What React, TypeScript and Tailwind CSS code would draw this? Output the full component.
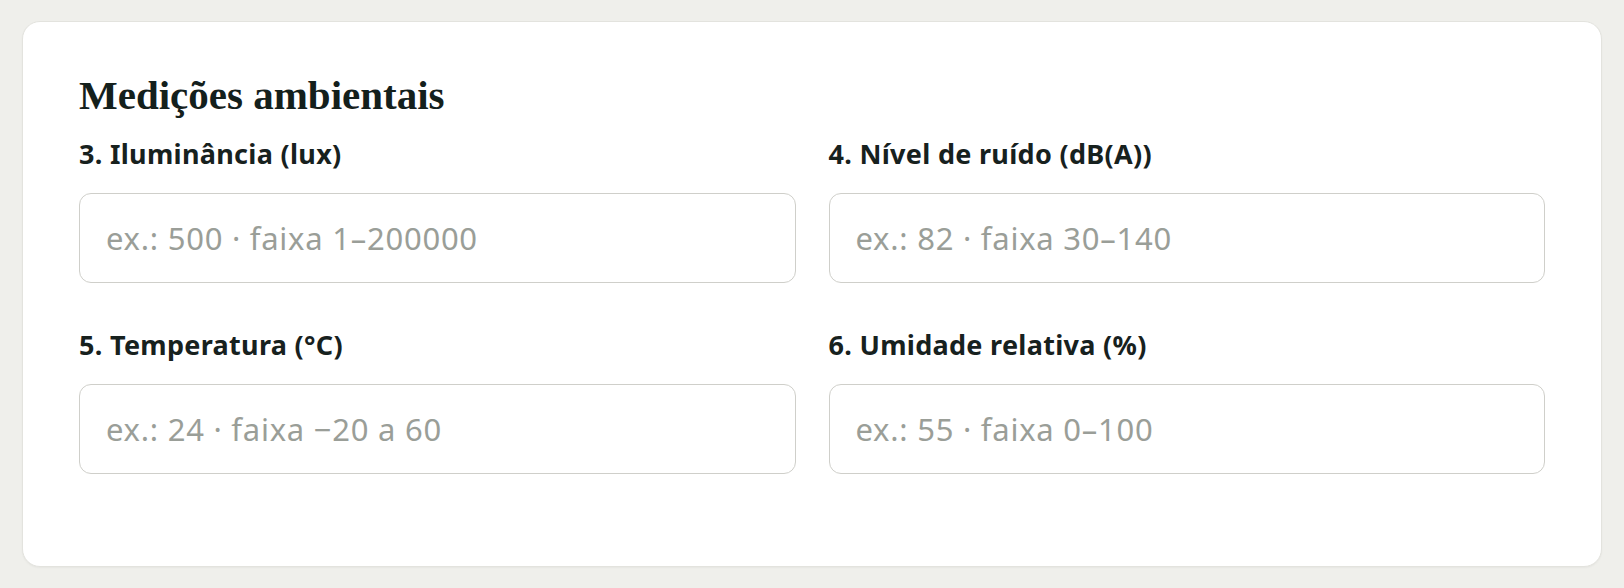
export default function App() {
  const fields = [
    { label: "3. Iluminância (lux)", placeholder: "ex.: 500 · faixa 1–200000" },
    { label: "4. Nível de ruído (dB(A))", placeholder: "ex.: 82 · faixa 30–140" },
    { label: "5. Temperatura (°C)", placeholder: "ex.: 24 · faixa −20 a 60" },
    { label: "6. Umidade relativa (%)", placeholder: "ex.: 55 · faixa 0–100" },
  ];

  return (
    <div className="min-h-screen bg-[#efefeb] px-[22px] pt-[21px] pb-[22px]">
      <div className="rounded-[18px] border border-[#e3e3de] bg-white px-[56px] pt-[49px] pb-[92px] shadow-[0_1px_2px_rgba(0,0,0,0.04)]">
        <h2 className="text-[41px] font-bold leading-[48px] text-[#14201c] [font-family:'Liberation_Serif',serif]">
          Medições ambientais
        </h2>
        <div className="mt-[19px] grid grid-cols-2 gap-x-[33px] gap-y-[46px]">
          {fields.map((f) => (
            <label key={f.label} className="flex flex-col [font-family:'Noto_Sans',sans-serif]">
              <span className="text-[27px] font-bold leading-[32px] tracking-[0.3px] text-[#17211e]">{f.label}</span>
              <input
                type="text"
                placeholder={f.placeholder}
                className="mt-[23px] h-[90px] rounded-[12px] border-[1.5px] border-[#cfcfca] bg-white px-[26px] text-[31px] tracking-[0.75px] text-[#17211e] outline-none placeholder:text-[#9a9e98]"
              />
            </label>
          ))}
        </div>
      </div>
    </div>
  );
}
